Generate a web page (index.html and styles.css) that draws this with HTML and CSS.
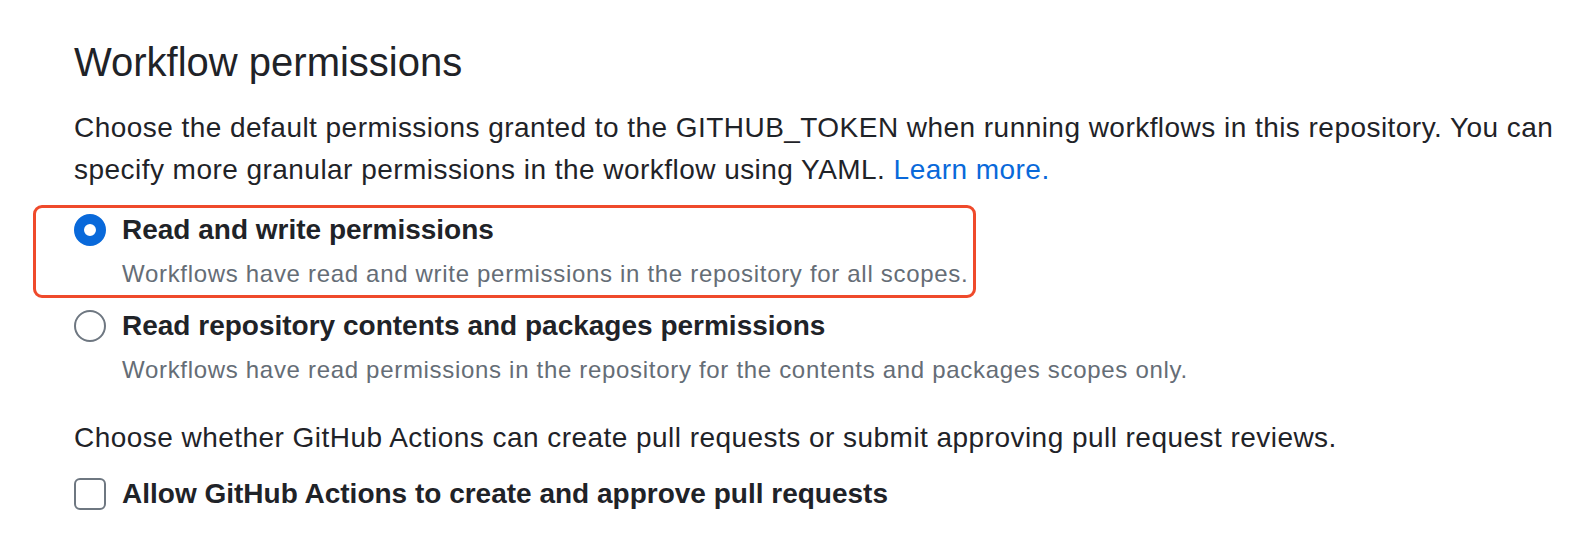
FILE: index.html
```html
<!DOCTYPE html>
<html lang="en">
<head>
<meta charset="utf-8">
<title>Workflow permissions</title>
<link rel="stylesheet" href="styles.css">
</head>
<body>
<section class="settings">
  <h2 class="heading">Workflow permissions</h2>
  <p class="note">Choose the default permissions granted to the GITHUB_TOKEN when running workflows in this repository. You can specify more granular permissions in the workflow using YAML. <a class="link" href="#">Learn more.</a></p>

  <div class="option option-highlight">
    <label class="option-row">
      <span class="radio radio-checked"></span>
      <span class="option-label">Read and write permissions</span>
    </label>
    <div class="option-desc">Workflows have read and write permissions in the repository for all scopes.</div>
  </div>

  <div class="option option-plain">
    <label class="option-row">
      <span class="radio"></span>
      <span class="option-label">Read repository contents and packages permissions</span>
    </label>
    <div class="option-desc">Workflows have read permissions in the repository for the contents and packages scopes only.</div>
  </div>

  <p class="note note-second">Choose whether GitHub Actions can create pull requests or submit approving pull request reviews.</p>

  <label class="option-row check-row">
    <span class="checkbox"></span>
    <span class="option-label">Allow GitHub Actions to create and approve pull requests</span>
  </label>
</section>
</body>
</html>
```

FILE: styles.css
```css
* { box-sizing: border-box; }

html, body {
  margin: 0;
  padding: 0;
  background: #ffffff;
}

body {
  font-family: "Liberation Sans", Arial, sans-serif;
  color: #1f2328;
}

.settings {
  padding: 37px 8px 0 74px;
  width: 1572px;
}

.heading {
  margin: 0;
  font-size: 40px;
  font-weight: 400;
  line-height: 50px;
  color: #1f2328;
}

.note {
  margin: 20px 0 0 0;
  font-size: 28px;
  line-height: 42px;
  letter-spacing: 0.46px;
  color: #1f2328;
}

.link {
  color: #0969da;
  text-decoration: none;
}

.option {
  display: flex;
  flex-direction: column;
  gap: 5px;
}

.option-highlight {
  margin: 14px 0 0 -41px;
  width: 943px;
  padding: 1px 0 3px 38px;
  border: 3px solid #ef4a2b;
  border-radius: 9px;
}

.option-plain {
  margin-top: 7px;
}

.option-row {
  display: flex;
  align-items: center;
  gap: 16px;
  height: 42px;
}

.option-label {
  font-size: 28px;
  font-weight: 700;
  line-height: 42px;
  color: #1f2328;
}

.option-desc {
  padding-left: 48px;
  font-size: 24px;
  line-height: 36px;
  letter-spacing: 0.69px;
  color: #656d76;
}

.radio {
  flex: none;
  width: 32px;
  height: 32px;
  border-radius: 50%;
  border: 2px solid #6e7781;
  background: #ffffff;
}

.radio-checked {
  border: 10px solid #0969da;
}

.note-second {
  margin-top: 29px;
}

.check-row {
  margin-top: 14px;
}

.checkbox {
  flex: none;
  width: 32px;
  height: 32px;
  border-radius: 6px;
  border: 2px solid #6e7781;
  background: #ffffff;
}
```
